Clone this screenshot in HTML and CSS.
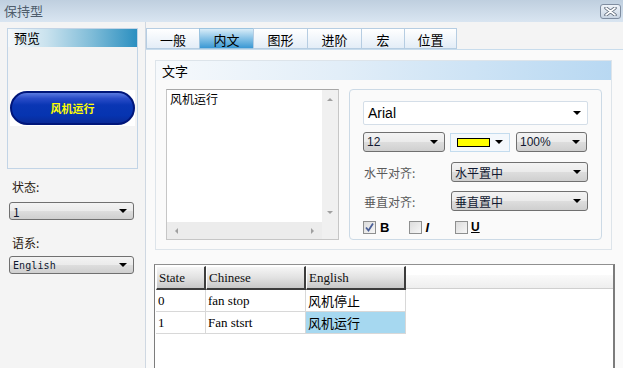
FILE: index.html
```html
<!DOCTYPE html>
<html>
<head>
<meta charset="utf-8">
<link rel="stylesheet" href="styles.css">
</head>
<body>
<div class="titlebar">
  <span class="title">保持型</span>
  <span class="close"><svg width="13" height="9" viewBox="0 0 13 9"><path d="M2 1 L11 8 M11 1 L2 8" stroke="#5c6878" stroke-width="3.4" stroke-linecap="round"/><path d="M2 1 L11 8 M11 1 L2 8" stroke="#ffffff" stroke-width="1.6" stroke-linecap="round"/></svg></span>
</div>
<div class="content">
  <div class="side">
    <div class="preview">
      <div class="preview-head">预览</div>
      <div class="btn-wrap"><div class="pill">风机运行</div></div>
    </div>
    <div class="side-label first">状态:</div>
    <div class="sel side-sel"><span>1</span><i class="arrow"></i></div>
    <div class="side-label second">语系:</div>
    <div class="sel side-sel mono"><span>English</span><i class="arrow"></i></div>
  </div>
  <div class="tabs-area">
    <div class="tabbar">
      <div class="tab w53">一般</div>
      <div class="tab w54 active">内文</div>
      <div class="tab w54">图形</div>
      <div class="tab w54">进阶</div>
      <div class="tab w43">宏</div>
      <div class="tab w53">位置</div>
    </div>
    <div class="panel">
      <div class="group">
        <div class="group-head">文字</div>
        <div class="group-body">
          <div class="textarea">
            <div class="ta-main">
              <div class="ta-text">风机运行</div>
              <div class="vscroll"><i class="up"></i><i class="down"></i></div>
            </div>
            <div class="ta-bottom">
              <div class="hscroll"><i class="left"></i><i class="right"></i></div>
              <div class="corner"></div>
            </div>
          </div>
          <div class="props">
            <div class="font-input"><span>Arial</span><i class="arrow"></i></div>
            <div class="row r2">
              <div class="sel size"><span>12</span><i class="arrow"></i></div>
              <div class="color"><span class="swatch"></span><i class="arrow"></i></div>
              <div class="sel pct"><span>100%</span><i class="arrow"></i></div>
            </div>
            <div class="row r3">
              <span class="lbl">水平对齐:</span>
              <div class="sel align"><span>水平置中</span><i class="arrow"></i></div>
            </div>
            <div class="row r4">
              <span class="lbl">垂直对齐:</span>
              <div class="sel align"><span>垂直置中</span><i class="arrow"></i></div>
            </div>
            <div class="row checks">
              <span class="chk"><svg width="11" height="11" viewBox="0 0 11 11"><path d="M2 5.5 L4.5 8.5 L9 1.5" fill="none" stroke="#4a5f97" stroke-width="1.8"/></svg></span><b class="cb">B</b>
              <span class="chk c2"></span><i class="ci">I</i>
              <span class="chk c3"></span><u class="cu">U</u>
            </div>
          </div>
        </div>
      </div>
      <div class="grid">
        <div class="ghead">
          <div class="hc c1">State</div>
          <div class="hc c2w">Chinese</div>
          <div class="hc c3w">English</div>
          <div class="strip"></div>
        </div>
        <div class="grow">
          <div class="dc c1">0</div>
          <div class="dc c2w">fan stop</div>
          <div class="dc c3w cjk">风机停止</div>
        </div>
        <div class="grow">
          <div class="dc c1">1</div>
          <div class="dc c2w">Fan stsrt</div>
          <div class="dc c3w cjk sel-cell">风机运行</div>
        </div>
      </div>
    </div>
  </div>
</div>
</body>
</html>
```
FILE: styles.css
```css
html, body {
  margin: 0;
  padding: 0;
}
body {
  width: 623px;
  height: 368px;
  overflow: hidden;
  background: #f4f4f4;
  font-family: "Noto Sans CJK SC", "Liberation Sans", sans-serif;
  font-size: 12px;
  color: #000;
}
.titlebar {
  height: 22px;
  display: flex;
  align-items: center;
  justify-content: space-between;
  padding: 0 2px 0 4px;
  box-sizing: border-box;
  background: linear-gradient(#bfcfdf, #d9e5f1);
}
.title {
  font-size: 13px;
  color: #4f5d6c;
  line-height: 16px;
}
.close {
  width: 21px;
  height: 15px;
  box-sizing: border-box;
  border: 1px solid #7f8da0;
  border-radius: 3px;
  background: linear-gradient(#eef3f9, #c9d5e3);
  display: flex;
  align-items: center;
  justify-content: center;
  margin-top: 1px;
}
.content {
  display: flex;
  height: 346px;
}
.side {
  width: 146px;
  box-sizing: border-box;
  border-right: 1px solid #cfd8e2;
  padding: 6px 0 0 7px;
}
.preview {
  width: 131px;
  height: 141px;
  box-sizing: border-box;
  border: 1px solid #c2d4e6;
  background: #f4f4f4;
}
.preview-head {
  height: 18px;
  line-height: 18px;
  padding-left: 6px;
  font-size: 13px;
  background: linear-gradient(to right, #f6f9fb 0%, #c9e2ee 30%, #7fbcd8 65%, #2b8fc0 100%);
}
.btn-wrap {
  margin: 43px 0 0 2px;
  width: 125px;
  height: 36px;
  background: #fff;
  display: flex;
  align-items: center;
}
.pill {
  width: 125px;
  height: 34px;
  box-sizing: border-box;
  border: 2px solid #00167a;
  border-radius: 17px;
  background: linear-gradient(#5a7ae0 0%, #2a4cc8 18%, #0a36b4 40%, #0634b0 75%, #0a2a98 100%);
  color: #ffff00;
  font-weight: bold;
  font-size: 11px;
  display: flex;
  align-items: center;
  justify-content: center;
  letter-spacing: 0px;
}
.side-label {
  margin-left: 5px;
  height: 16px;
  line-height: 16px;
  font-size: 12px;
  color: #2a1a10;
}
.side-label.first { margin-top: 10px; }
.side-label.second { margin-top: 15px; }
.sel {
  display: flex;
  align-items: center;
  justify-content: space-between;
  box-sizing: border-box;
  border: 1px solid #707070;
  border-radius: 3px;
  background: linear-gradient(#f3f3f3 0%, #ebebeb 48%, #dddddd 52%, #cfcfcf 100%);
  padding: 0 6px 0 3px;
  font-size: 12px;
  color: #101830;
}
.side-sel {
  margin-left: 2px;
  width: 125px;
  height: 18px;
  margin-top: 7px;
}
.side-label.second + .side-sel { margin-top: 5px; }
.mono span {
  font-family: "DejaVu Sans Mono", monospace;
  font-size: 10px;
  letter-spacing: 0.1px;
}
.arrow {
  display: block;
  width: 0;
  height: 0;
  border-left: 4px solid transparent;
  border-right: 4px solid transparent;
  border-top: 4px solid #000;
}
.tabs-area {
  flex: 1;
  padding-top: 6px;
  display: flex;
  flex-direction: column;
}
.tabbar {
  display: flex;
  height: 21px;
}
.tab {
  box-sizing: border-box;
  height: 21px;
  border: 1px solid #b6cde2;
  border-right: none;
  background: linear-gradient(#ffffff, #e3edf7);
  display: flex;
  align-items: center;
  justify-content: center;
  font-size: 13px;
  padding-top: 1px;
}
.tab:last-child { border-right: 1px solid #b6cde2; }
.tab.active {
  background: linear-gradient(#d8ecf8 0%, #8ec6e8 45%, #3a98d4 100%);
  border-color: #9cc4e0;
}
.w53 { width: 53px; }
.w54 { width: 54px; }
.w43 { width: 43px; }
.panel {
  flex: 1;
  background: #fafafa;
  padding: 10px 0 0 9px;
  border-top: 1px solid #c8dcec;
}
.group {
  width: 457px;
  height: 190px;
  box-sizing: border-box;
  border: 1px solid #dde4ea;
  background: #fafafa;
}
.group-head {
  height: 19px;
  line-height: 19px;
  padding-left: 6px;
  font-size: 13px;
  background: linear-gradient(to right, #f6f9fc 0%, #e2eef8 40%, #b8d8f2 100%);
}
.group-body {
  display: flex;
  padding: 9px 0 0 10px;
  gap: 10px;
}
.textarea {
  width: 173px;
  height: 151px;
  box-sizing: border-box;
  border: 1px solid #c6c6c6;
  border-top-color: #a8a8a8;
  background: #fff;
  display: flex;
  flex-direction: column;
}
.ta-main {
  flex: 1;
  display: flex;
}
.ta-text {
  flex: 1;
  padding: 1px 3px;
  font-size: 12px;
  line-height: 16px;
}
.vscroll {
  width: 16px;
  background: #f0f0f0;
  display: flex;
  flex-direction: column;
  justify-content: space-between;
  align-items: center;
  padding: 8px 0 8px;
  box-sizing: border-box;
}
.up, .down, .left, .right { display: block; width: 0; height: 0; }
.up { border-left: 3px solid transparent; border-right: 3px solid transparent; border-bottom: 3px solid #a0a0a0; }
.down { border-left: 3px solid transparent; border-right: 3px solid transparent; border-top: 3px solid #a0a0a0; }
.left { border-top: 3px solid transparent; border-bottom: 3px solid transparent; border-right: 3px solid #a0a0a0; }
.right { border-top: 3px solid transparent; border-bottom: 3px solid transparent; border-left: 3px solid #a0a0a0; }
.ta-bottom {
  height: 17px;
  display: flex;
}
.hscroll {
  flex: 1;
  background: #ececec;
  display: flex;
  justify-content: space-between;
  align-items: center;
  padding: 0 8px;
}
.corner {
  width: 16px;
  background: #f0f0f0;
}
.props {
  width: 253px;
  height: 151px;
  box-sizing: border-box;
  border: 1px solid #ccdae6;
  border-radius: 4px;
  background: #fafafa;
  padding: 11px 0 0 13px;
}
.font-input {
  width: 225px;
  height: 24px;
  box-sizing: border-box;
  border: 1px solid #d4dee8;
  border-radius: 2px;
  background: #fff;
  display: flex;
  align-items: center;
  justify-content: space-between;
  padding: 0 6px 0 4px;
  font-family: "Liberation Sans", sans-serif;
  font-size: 14px;
}
.row {
  display: flex;
  align-items: center;
}
.r2 { margin-top: 7px; height: 20px; }
.r3 { margin-top: 10px; height: 20px; }
.r4 { margin-top: 9px; height: 20px; }
.size { width: 82px; height: 20px; font-family: "Liberation Sans", sans-serif; font-size: 12px; }
.pct { width: 71px; height: 20px; margin-left: 6px; font-family: "Liberation Sans", sans-serif; font-size: 12px; }
.color {
  width: 60px;
  height: 19px;
  margin-left: 5px;
  box-sizing: border-box;
  border: 1px solid #c4dcee;
  background: #f4f8fc;
  display: flex;
  align-items: center;
  padding: 0 6px 0 6px;
  justify-content: space-between;
}
.swatch {
  width: 31px;
  height: 7px;
  background: #ffff00;
  border: 1px solid #000;
}
.lbl {
  width: 87px;
  padding-left: 1px;
  color: #5a5a5a;
  font-size: 12px;
}
.align { width: 137px; height: 20px; }
.checks {
  margin-top: 9px;
  height: 14px;
}
.chk {
  width: 13px;
  height: 13px;
  box-sizing: border-box;
  border: 1px solid #8e8f8f;
  background: linear-gradient(135deg, #dcdcdc, #f6f6f6);
  display: flex;
  align-items: center;
  justify-content: center;
}
.cb {
  margin-left: 4px;
  font-family: "Liberation Sans", sans-serif;
  font-size: 13px;
  font-weight: bold;
}
.c2 { margin-left: 20px; }
.ci {
  margin-left: 3px;
  font-family: "Liberation Sans", sans-serif;
  font-size: 13px;
  font-weight: bold;
}
.c3 { margin-left: 26px; }
.cu {
  margin-left: 3px;
  font-family: "Liberation Sans", sans-serif;
  font-size: 12px;
  font-weight: bold;
}
.grid {
  margin: 14px 0 0 -1px;
  width: 461px;
  height: 120px;
  box-sizing: border-box;
  border: 1px solid #7c7c7c;
  border-right-width: 2px;
  border-top-color: #909090;
  background: #fff;
  padding: 1px 0 0 1px;
  font-family: "Liberation Serif", serif;
  font-size: 13px;
}
.ghead {
  display: flex;
  height: 24px;
}
.hc {
  box-sizing: border-box;
  height: 24px;
  border-top: 1px solid #ffffff;
  border-left: 1px solid #ffffff;
  border-right: 2px solid #3c3c3c;
  border-bottom: 2px solid #3c3c3c;
  background: linear-gradient(#f6f6f6 0%, #e2e2e2 50%, #c8c8c8 100%);
  padding: 3px 0 0 2px;
  line-height: 16px;
  color: #101010;
}
.c1 { width: 50px; }
.c2w { width: 100px; }
.c3w { width: 100px; }
.strip {
  flex: 1;
  margin-top: 9px;
  height: 14px;
  box-sizing: border-box;
  background: linear-gradient(#fafafa, #eeeeee);
  border-bottom: 1px solid #cfcfcf;
}
.grow {
  display: flex;
  height: 22px;
}
.dc {
  box-sizing: border-box;
  height: 22px;
  border-right: 1px solid #d8d8d8;
  border-bottom: 1px solid #d8d8d8;
  padding: 2px 0 0 2px;
  line-height: 17px;
  background: #fff;
}
.cjk {
  font-family: "Noto Sans CJK SC", sans-serif;
  font-size: 13px;
  line-height: 17px;
  padding-left: 2px;
}
.sel-cell { background: #a6d8f0; }
```
